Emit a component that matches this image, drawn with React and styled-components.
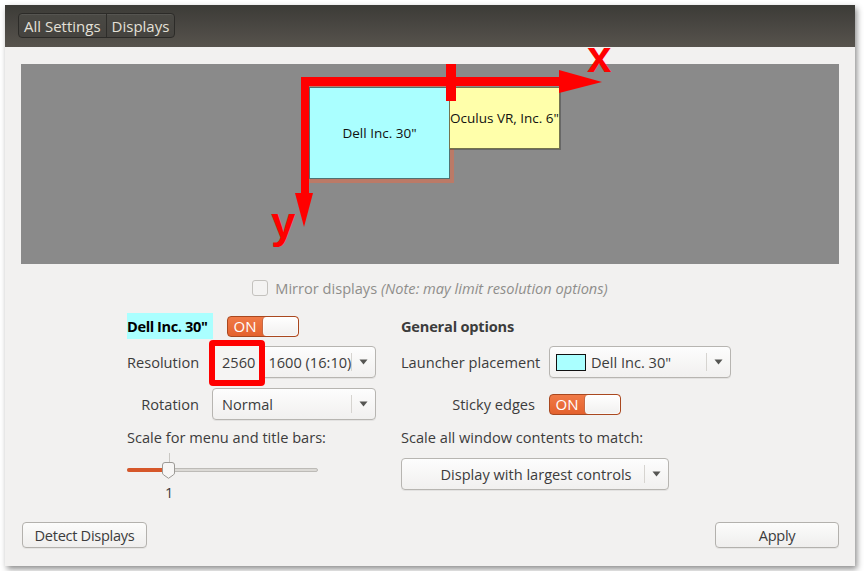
import React from "react";
import styled, { createGlobalStyle } from "styled-components";

const Global = createGlobalStyle`
  html, body { margin: 0; padding: 0; background: #ffffff; }
  body { font-family: "Open Sans", "Noto Sans", sans-serif; font-size: 14.6px; color: #3c3c3c; }
  * { box-sizing: border-box; }
`;

const Window = styled.div`
  margin: 5px;
  width: 850px;
  height: 561px;
  background: #f2f1f0;
  display: flex;
  flex-direction: column;
  box-shadow: 2px 3px 6px rgba(0, 0, 0, 0.45);
`;

const TitleBar = styled.div`
  height: 42px;
  flex: none;
  background: linear-gradient(#3c3b37, #57534d);
  display: flex;
  align-items: center;
  padding-left: 13px;
  padding-bottom: 1px;
`;

const Segmented = styled.div`
  display: flex;
  height: 25px;
  border: 1px solid #2c2b28;
  border-radius: 4px;
  background: linear-gradient(#4a4944, #45433f);
  box-shadow: inset 0 1px 0 rgba(255, 255, 255, 0.07);
  overflow: hidden;
`;

const Crumb = styled.div`
  padding: 0 5px;
  display: flex;
  align-items: center;
  color: #e4e0d8;
  font-size: 15px;
  & + & { border-left: 1px solid #2e2d2a; }
`;

const Content = styled.div`
  flex: 1;
  display: flex;
  flex-direction: column;
  padding: 17px 16px 18px;
`;

const Canvas = styled.div`
  position: relative;
  height: 200px;
  background: #8a8a8a;
  font-family: "Open Sans", sans-serif;
  font-size: 13.5px;
  color: #111;
`;

const Monitor = styled.div`
  position: absolute;
  display: flex;
  align-items: center;
  justify-content: center;
  border: 1px solid rgba(0, 0, 0, 0.55);
  background: ${(p) => p.$bg};
  box-shadow: ${(p) => (p.$selected ? "0 0 0 4px rgba(228, 110, 75, 0.55)" : "1px 1px 0 rgba(0,0,0,0.25)")};
  white-space: nowrap;
`;

const Overlay = styled.svg`
  position: absolute;
  left: 0;
  top: 0;
  overflow: visible;
  pointer-events: none;
`;

const MirrorRow = styled.div`
  margin-top: 16px;
  height: 16px;
  display: flex;
  align-items: center;
  justify-content: center;
  gap: 7px;
  color: #8f8e8b;
`;

const CheckBox = styled.div`
  width: 16px;
  height: 16px;
  border: 1px solid #c4c2be;
  border-radius: 3px;
  background: #f4f3f2;
`;

const Note = styled.i`
  font-style: italic;
`;

const Settings = styled.div`
  margin-top: 14px;
  margin-left: 106px;
  display: flex;
  gap: 25px;
`;

const Panel = styled.div`
  display: grid;
  grid-template-columns: ${(p) => p.$cols};
  grid-template-rows: 32px 40px 44px 22px auto;
  column-gap: ${(p) => p.$gap}px;
  align-items: center;
`;

const Span = styled.div`
  grid-column: 1 / -1;
  display: flex;
  align-items: center;
  gap: ${(p) => p.$gap || 0}px;
  align-self: ${(p) => p.$self || "center"};
  padding-top: ${(p) => p.$pt || 0}px;
`;

const Label = styled.div`
  text-align: ${(p) => p.$align || "left"};
  white-space: nowrap;
  color: #3c3c3c;
`;

const DisplayName = styled.div`
  background: #aaffff;
  color: #000;
  font-weight: 700;
  height: 26px;
  width: 86px;
  display: flex;
  align-items: center;
  white-space: nowrap;
  letter-spacing: -0.4px;
`;

const Heading = styled.div`
  font-weight: 700;
  color: #3c3c3c;
  letter-spacing: -0.2px;
`;

const SwitchBox = styled.div`
  width: 72px;
  height: 21px;
  border: 1px solid #a9481f;
  border-radius: 4px;
  background: linear-gradient(#f07a47, #e4622e);
  display: flex;
  overflow: hidden;
`;

const SwitchText = styled.div`
  flex: 1;
  display: flex;
  align-items: center;
  justify-content: center;
  color: #fff;
  font-size: 15px;
`;

const Knob = styled.div`
  width: 36px;
  background: linear-gradient(#ffffff, #f1f0ef);
  border-left: 1px solid #c66a45;
  border-radius: 4px;
  box-shadow: inset 0 0 0 1px rgba(255,255,255,0.6);
`;

const Combo = styled.div`
  position: relative;
  width: ${(p) => p.$w}px;
  height: 32px;
  border: 1px solid #b7b5b1;
  border-radius: 4px;
  background: linear-gradient(#fdfdfd, #f1f0ef);
  box-shadow: 0 1px 0 rgba(0, 0, 0, 0.06);
  display: flex;
  align-items: center;
`;

const ComboBody = styled.div`
  flex: 1;
  display: flex;
  align-items: center;
  gap: 5px;
  padding-left: ${(p) => p.$pl || 9}px;
  justify-content: ${(p) => (p.$center ? "center" : "flex-start")};
  white-space: nowrap;
  color: #3c3c3c;
  position: relative;
  z-index: 1;
`;

const ComboSep = styled.div`
  width: 1px;
  align-self: stretch;
  margin: 6px 0;
  background: #d6d4d0;
`;

const ComboArrow = styled.div`
  width: 23px;
  display: flex;
  justify-content: center;
  align-items: center;
`;

const Swatch = styled.div`
  width: 30px;
  height: 17px;
  background: #aaffff;
  border: 1px solid #111;
`;

const RedMark = styled.div`
  position: absolute;
  left: -4px;
  top: -7px;
  width: 56px;
  height: 46px;
  border: 6px solid #ff0000;
  border-radius: 4px;
  background: #f5f4f3;
  z-index: 0;
`;

const SliderWrap = styled.div`
  width: 191px;
  display: flex;
  flex-direction: column;
  padding-top: 5px;
`;

const Tick = styled.div`
  width: 1px;
  height: 9px;
  margin-left: 42px;
  background: #c9c7c3;
`;

const TrackArea = styled.div`
  position: relative;
  height: 16px;
`;

const Track = styled.div`
  position: absolute;
  left: 0;
  right: 0;
  top: 6px;
  height: 4px;
  border-radius: 2px;
  background: #dcdad6;
  border: 1px solid #bdbbb7;
`;

const Fill = styled.div`
  position: absolute;
  left: 0;
  top: 6px;
  height: 4px;
  border-radius: 2px;
  background: #d6572a;
`;

const Thumb = styled.svg`
  position: absolute;
  left: 35px;
  top: 0;
`;

const SliderValue = styled.div`
  margin-top: 4px;
  margin-left: 38px;
  color: #3c3c3c;
`;

const Footer = styled.div`
  margin-top: auto;
  display: flex;
  justify-content: space-between;
  padding: 0 0 0 1px;
`;

const Button = styled.button`
  font-family: inherit;
  font-size: 14.6px;
  color: #3c3c3c;
  height: 26px;
  width: ${(p) => p.$w}px;
  border: 1px solid #b3b1ad;
  border-radius: 4px;
  background: linear-gradient(#fcfcfb, #efeeed);
  box-shadow: 0 1px 0 rgba(0, 0, 0, 0.05);
  padding: 0;
  letter-spacing: -0.3px;
`;

const Arrow = () => (
  <svg width="9" height="6" viewBox="0 0 9 6">
    <path d="M0.5 0.5 H8.5 L4.5 5.5 Z" fill="#555552" />
  </svg>
);

const Switch = () => (
  <SwitchBox>
    <SwitchText>ON</SwitchText>
    <Knob />
  </SwitchBox>
);

export default function App() {
  return (
    <>
      <Global />
      <Window>
        <TitleBar>
          <Segmented>
            <Crumb>All Settings</Crumb>
            <Crumb>Displays</Crumb>
          </Segmented>
        </TitleBar>
        <Content>
          <Canvas>
            <Monitor $bg="#aaffff" $selected style={{ left: 288, top: 23, width: 141, height: 92 }}>
              Dell Inc. 30"
            </Monitor>
            <Monitor $bg="#ffffaa" style={{ left: 428, top: 23, width: 111, height: 62 }}>
              Oculus VR, Inc. 6"
            </Monitor>
            <Overlay width="818" height="200">
              <rect x="280" y="13" width="262" height="9" fill="#ff0000" />
              <polygon points="538,6 581,18 538,29" fill="#ff0000" />
              <rect x="280" y="13" width="8" height="120" fill="#ff0000" />
              <polygon points="274,129 292,129 283,163" fill="#ff0000" />
              <rect x="425" y="0" width="10" height="37" fill="#ff0000" />
              <text x="566" y="8" fill="#ff0000" fontFamily="Liberation Sans, sans-serif" fontWeight="700" fontSize="44">x</text>
              <text x="250" y="174" fill="#ff0000" fontFamily="Liberation Sans, sans-serif" fontWeight="700" fontSize="44">y</text>
            </Overlay>
          </Canvas>

          <MirrorRow>
            <CheckBox />
            <span>
              Mirror displays <Note>(Note: may limit resolution options)</Note>
            </span>
          </MirrorRow>

          <Settings>
            <Panel $cols="72px 164px" $gap={13}>
              <Span $gap={14}>
                <DisplayName>Dell Inc. 30"</DisplayName>
                <Switch />
              </Span>
              <Label $align="right">Resolution</Label>
              <Combo $w={164}>
                <RedMark />
                <ComboBody>
                  <span>2560</span>
                  <span style={{ marginLeft: 8 }}>1600 (16:10)</span>
                </ComboBody>
                <ComboSep />
                <ComboArrow>
                  <Arrow />
                </ComboArrow>
              </Combo>
              <Label $align="right">Rotation</Label>
              <Combo $w={164}>
                <ComboBody>Normal</ComboBody>
                <ComboSep />
                <ComboArrow>
                  <Arrow />
                </ComboArrow>
              </Combo>
              <Span>
                <Label>Scale for menu and title bars:</Label>
              </Span>
              <Span $self="start">
                <SliderWrap>
                  <Tick />
                  <TrackArea>
                    <Track />
                    <Fill style={{ width: 41 }} />
                    <Thumb width="13" height="17" viewBox="0 0 13 17">
                      <path
                        d="M3 0.5 H10 Q12.5 0.5 12.5 3 V11 Q12.5 12 11.5 12.8 L6.5 16.3 L1.5 12.8 Q0.5 12 0.5 11 V3 Q0.5 0.5 3 0.5 Z"
                        fill="#f7f6f5"
                        stroke="#9c9a96"
                      />
                    </Thumb>
                  </TrackArea>
                  <SliderValue>1</SliderValue>
                </SliderWrap>
              </Span>
            </Panel>

            <Panel $cols="134px 182px" $gap={14}>
              <Span>
                <Heading>General options</Heading>
              </Span>
              <Label>Launcher placement</Label>
              <Combo $w={182}>
                <ComboBody $pl={6}>
                  <Swatch />
                  <span>Dell Inc. 30"</span>
                </ComboBody>
                <ComboSep />
                <ComboArrow>
                  <Arrow />
                </ComboArrow>
              </Combo>
              <Label $align="right">Sticky edges</Label>
              <div>
                <Switch />
              </div>
              <Span>
                <Label>Scale all window contents to match:</Label>
              </Span>
              <Span $self="start" $pt={10}>
                <Combo $w={268}>
                  <ComboBody $center $pl={26}>
                    Display with largest controls
                  </ComboBody>
                  <ComboSep />
                  <ComboArrow>
                    <Arrow />
                  </ComboArrow>
                </Combo>
              </Span>
            </Panel>
          </Settings>

          <Footer>
            <Button $w={125}>Detect Displays</Button>
            <Button $w={124}>Apply</Button>
          </Footer>
        </Content>
      </Window>
    </>
  );
}
